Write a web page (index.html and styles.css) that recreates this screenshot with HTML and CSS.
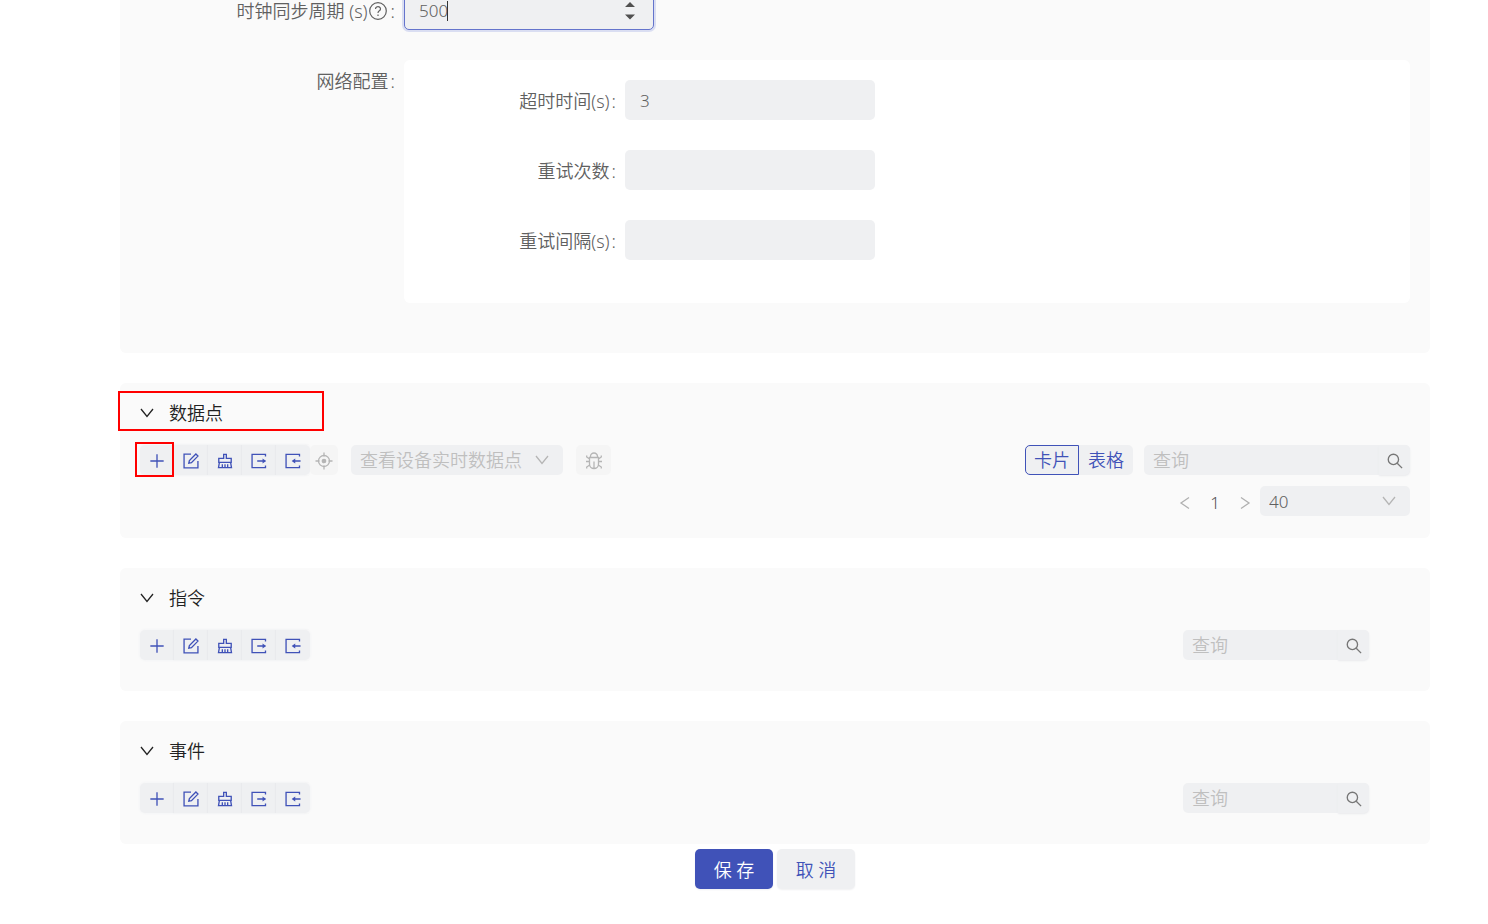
FILE: index.html
```html
<!DOCTYPE html>
<html lang="zh-CN">
<head>
<meta charset="utf-8">
<title>设备配置</title>
<link rel="stylesheet" href="styles.css">
</head>
<body>
<svg class="sprite" aria-hidden="true">
  <symbol id="i-plus" viewBox="0 0 18 18"><path d="M9 1.500v15M1.500 9h15"/></symbol>
  <symbol id="i-edit" viewBox="0 0 18 18"><path d="M9 1.200H1.200V16.800H16.800V9M6.500 11.500l.7-3L14.500 1.200l2.300 2.300-7.300 7.300z"/></symbol>
  <symbol id="i-clear" viewBox="0 0 18 18"><path d="M7.500 6V1.500h3V6h5.500v4.500H2V6zM2.700 10.500L1.700 16.500h14.600l-1-6M6 16v-3.300M9 16v-3.300M12 16v-3.300"/></symbol>
  <symbol id="i-export" viewBox="0 0 18 18"><path d="M16.300 4V1.500H1.200V16.500H16.300V14M7 9h9"/><path fill="currentColor" stroke="none" d="M13 6.200L17 9l-4 2.800z"/></symbol>
  <symbol id="i-import" viewBox="0 0 18 18"><path d="M16.300 4V1.500H1.200V16.500H16.300V14M9 9h8.500"/><path fill="currentColor" stroke="none" d="M11.500 6.200L7.500 9l4 2.800z"/></symbol>
  <symbol id="i-aim" viewBox="0 0 18 18"><circle cx="9" cy="9" r="5.500"/><circle cx="9" cy="9" r="1.700" fill="currentColor"/><path d="M9 .5v4M9 13.500v4M.5 9h4M13.500 9h4"/></symbol>
  <symbol id="i-bug" viewBox="0 0 18 18"><path d="M5.500 5.500V4.500a3.500 3.500 0 0 1 7 0v1M4.500 5.500h9V12a4.500 4.500 0 0 1-9 0zM1 9.500h3.500M13.500 9.500H17M1.700 3.500v1.500l2.800 2M16.300 3.500v1.500l-2.800 2M1.700 16.500V15l3-2M16.300 16.500V15l-3-2M9 9.500v6.500"/></symbol>
  <symbol id="i-search" viewBox="0 0 18 18"><circle cx="7.200" cy="7.200" r="5.800"/><path d="M11.500 11.500l5.500 5.500"/></symbol>
  <symbol id="i-down" viewBox="0 0 14 14"><path d="M1 3l6 7.500L13 3"/></symbol>
  <symbol id="i-left" viewBox="0 0 14 14"><path d="M11 1.500L3 7l8 5.500"/></symbol>
  <symbol id="i-right" viewBox="0 0 14 14"><path d="M3 1.500L11 7l-8 5.500"/></symbol>
  <symbol id="i-help" viewBox="0 0 18 18"><circle cx="9" cy="9" r="8.300"/><path d="M6.500 7a2.500 2.300 0 1 1 3.900 1.800C9.500 9.400 9 9.700 9 11M9 12.500v1.500"/></symbol>
  <symbol id="i-spin" viewBox="0 0 10 18"><path fill="currentColor" stroke="none" d="M5 0l5 5H0zM5 17.500l5-5H0z"/></symbol>
</svg>

<main class="page">
  <form class="form">
    <section class="panel settings">
      <div class="field">
        <label class="label" for="sync">时钟同步周期 (s)<svg class="icon"><use href="#i-help"/></svg><span class="colon">:</span></label>
        <div class="number">
          <input class="input focused" id="sync" type="number" value="500">
          <span class="caret"></span>
          <svg class="spin"><use href="#i-spin"/></svg>
        </div>
      </div>
      <div class="field">
        <span class="label">网络配置<span class="colon">:</span></span>
        <div class="group">
          <div class="field"><label class="label" for="timeout">超时时间(s)<span class="colon">:</span></label><input class="input" id="timeout" type="text" value="3"></div>
          <div class="field"><label class="label" for="retries">重试次数<span class="colon">:</span></label><input class="input" id="retries" type="text"></div>
          <div class="field"><label class="label" for="interval">重试间隔(s)<span class="colon">:</span></label><input class="input" id="interval" type="text"></div>
        </div>
      </div>
    </section>

    <section class="panel points">
      <span class="mark mark-title"></span>
      <span class="mark mark-add"></span>
      <h2 class="title"><svg class="chevron"><use href="#i-down"/></svg>数据点</h2>
      <div class="bar">
        <div class="tools">
          <button class="tool" type="button" aria-label="添加"><svg class="icon"><use href="#i-plus"/></svg></button>
          <button class="tool" type="button" aria-label="编辑"><svg class="icon"><use href="#i-edit"/></svg></button>
          <button class="tool" type="button" aria-label="清空"><svg class="icon"><use href="#i-clear"/></svg></button>
          <button class="tool" type="button" aria-label="导出"><svg class="icon"><use href="#i-export"/></svg></button>
          <button class="tool" type="button" aria-label="导入"><svg class="icon"><use href="#i-import"/></svg></button>
        </div>
        <button class="tool off aim" type="button" disabled aria-label="定位"><svg class="icon"><use href="#i-aim"/></svg></button>
        <div class="select live">
          <select aria-label="实时数据点"><option>查看设备实时数据点</option></select>
          <svg class="chevron"><use href="#i-down"/></svg>
        </div>
        <button class="tool off bug" type="button" disabled aria-label="调试"><svg class="icon"><use href="#i-bug"/></svg></button>
        <div class="right">
          <div class="switch">
            <button class="view on" type="button">卡片</button>
            <button class="view" type="button">表格</button>
          </div>
          <div class="search wide">
            <input type="text" placeholder="查询" aria-label="查询数据点">
            <button class="find" type="button" aria-label="搜索"><svg class="icon"><use href="#i-search"/></svg></button>
          </div>
        </div>
      </div>
      <nav class="pager">
        <button class="step" type="button" aria-label="上一页"><svg class="chevron"><use href="#i-left"/></svg></button>
        <button class="step now" type="button">1</button>
        <button class="step" type="button" aria-label="下一页"><svg class="chevron"><use href="#i-right"/></svg></button>
        <div class="select size">
          <select aria-label="每页条数"><option>40</option></select>
          <svg class="chevron"><use href="#i-down"/></svg>
        </div>
      </nav>
    </section>

    <section class="panel short">
      <h2 class="title"><svg class="chevron"><use href="#i-down"/></svg>指令</h2>
      <div class="bar">
        <div class="tools">
          <button class="tool" type="button" aria-label="添加"><svg class="icon"><use href="#i-plus"/></svg></button>
          <button class="tool" type="button" aria-label="编辑"><svg class="icon"><use href="#i-edit"/></svg></button>
          <button class="tool" type="button" aria-label="清空"><svg class="icon"><use href="#i-clear"/></svg></button>
          <button class="tool" type="button" aria-label="导出"><svg class="icon"><use href="#i-export"/></svg></button>
          <button class="tool" type="button" aria-label="导入"><svg class="icon"><use href="#i-import"/></svg></button>
        </div>
        <div class="right">
          <div class="search">
            <input type="text" placeholder="查询" aria-label="查询指令">
            <button class="find" type="button" aria-label="搜索"><svg class="icon"><use href="#i-search"/></svg></button>
          </div>
        </div>
      </div>
    </section>

    <section class="panel short">
      <h2 class="title"><svg class="chevron"><use href="#i-down"/></svg>事件</h2>
      <div class="bar">
        <div class="tools">
          <button class="tool" type="button" aria-label="添加"><svg class="icon"><use href="#i-plus"/></svg></button>
          <button class="tool" type="button" aria-label="编辑"><svg class="icon"><use href="#i-edit"/></svg></button>
          <button class="tool" type="button" aria-label="清空"><svg class="icon"><use href="#i-clear"/></svg></button>
          <button class="tool" type="button" aria-label="导出"><svg class="icon"><use href="#i-export"/></svg></button>
          <button class="tool" type="button" aria-label="导入"><svg class="icon"><use href="#i-import"/></svg></button>
        </div>
        <div class="right">
          <div class="search">
            <input type="text" placeholder="查询" aria-label="查询事件">
            <button class="find" type="button" aria-label="搜索"><svg class="icon"><use href="#i-search"/></svg></button>
          </div>
        </div>
      </div>
    </section>
  </form>
  <div class="actions">
    <button class="action primary" type="button">保 存</button>
    <button class="action" type="button">取 消</button>
  </div>
</main>
</body>
</html>
```

FILE: styles.css
```css
* { box-sizing: border-box; }
body {
  margin: 0;
  background: #fff;
  color: #606060;
  font: 350 18px/30px "Noto Sans", "Noto Sans CJK SC", sans-serif;
}
button, input, select { font: inherit; color: inherit; border: 0; margin: 0; padding: 0; }
button { cursor: pointer; }
svg { fill: none; stroke: currentColor; flex: none; }
.sprite { position: absolute; width: 0; height: 0; }
.icon { width: 16px; height: 16px; stroke-width: 1.5; }
.chevron { width: 14px; height: 14px; stroke-width: 1.3; }

.page { padding: 0 58px 0 120px; margin-top: -10px; }
.form { display: flex; flex-direction: column; gap: 30px; }
.panel { background: #fafafa; border-radius: 6px; position: relative; }

.settings { padding: 0 20px 50px 0; display: flex; flex-direction: column; gap: 30px; }
.field { display: flex; }
.label {
  flex: none;
  width: 284px;
  height: 40px;
  padding: 1px 9px 0 0;
  display: flex;
  align-items: center;
  justify-content: flex-end;
  font-size: 18px;
}
.label .icon { width: 18px; height: 18px; margin-left: 1px; stroke-width: 1.2; }
.colon { margin-left: 2px; }
.label .icon + .colon { margin-left: 4px; }
.input {
  width: 250px;
  height: 40px;
  padding: 0 15px;
  border-radius: 5px;
  background: #eff0f2;
  font-size: 17px;
  outline: 0;
}
.number { position: relative; }
.number .input { appearance: textfield; padding: 0 14px; }
.number .input::-webkit-inner-spin-button { appearance: none; }
.focused { border: 1px solid #6474cc; box-shadow: 0 0 0 2px #dadef2; }
.caret { position: absolute; left: 43px; top: 11px; width: 1px; height: 20px; background: #333; }
.spin { position: absolute; right: 19px; top: 12px; width: 10px; height: 18px; color: #505050; }
.group {
  flex: 1;
  background: #fff;
  border-radius: 6px;
  padding: 20px 20px 43px 0;
  display: flex;
  flex-direction: column;
  gap: 30px;
}
.group .label { width: 221px; }

.points { padding: 15px 20px 22px; }
.short { padding: 15px 61px 31px 20px; }
.title {
  margin: 0 0 17px;
  font-size: 18px;
  font-weight: 350;
  line-height: 30px;
  color: #222;
  display: flex;
  align-items: center;
  gap: 15px;
}
.bar { display: flex; height: 30px; }
.tools, .tool { border-radius: 5px; }
.tools { display: flex; background: #eff0f2; box-shadow: 0 0 3px #eff0f2; }
.tool {
  width: 34px;
  height: 30px;
  display: flex;
  align-items: center;
  justify-content: center;
  padding-top: 1px;
  background: none;
  color: #4052b8;
}
.tool + .tool { box-shadow: -1px 0 1px #e9eaed; border-radius: 0; }
.tool.off { background: #f5f5f5; color: #b5b5b5; }
.aim { width: 28px; }
.bug { width: 35px; }
.off .icon { width: 18px; height: 18px; stroke-width: 1.3; }
.select { position: relative; background: #eff0f2; border-radius: 5px; height: 30px; }
.select select {
  appearance: none;
  width: 100%;
  height: 30px;
  padding: 0 9px;
  background: none;
  outline: 0;
}
.select .chevron { position: absolute; right: 14px; top: 8px; color: #b5b5b5; pointer-events: none; }
.live { width: 212px; margin: 0 13px; color: #bfbfbf; }
.size { width: 150px; }
.size select { font-size: 17px; }
.right { margin-left: auto; display: flex; gap: 11px; }
.switch { display: flex; background: #eff0f2; border-radius: 5px; }
.view { width: 54px; height: 30px; line-height: 28px; background: none; color: #4052b8; }
.view.on { border: 1px solid #4052b8; border-radius: 5px 0 0 5px; }
.search { display: flex; background: #eff0f2; border-radius: 5px; width: 186px; height: 30px; }
.search.wide { width: 266px; }
.search input { flex: 1; min-width: 0; padding: 0 9px; background: none; outline: 0; }
.search input::placeholder { color: #bfbfbf; opacity: 1; }
.find {
  width: 31px;
  display: flex;
  align-items: center;
  justify-content: center;
  padding-top: 1px;
  background: #eff0f2;
  color: #777;
  border-radius: 0 5px 5px 0;
  box-shadow: 0 1px 2px #e9eaed;
}
.pager { display: flex; justify-content: flex-end; margin-top: 11px; }
.step { width: 30px; height: 34px; margin-bottom: -4px; background: none; display: flex; align-items: center; justify-content: center; color: #b0b0b0; }
.now { color: #555; font-size: 17px; }

.mark { position: absolute; border: 2px solid #f00; pointer-events: none; z-index: 1; }
.mark-title { left: -2px; top: 8px; width: 206px; height: 40px; }
.mark-add { left: 15px; top: 59px; width: 39px; height: 35px; }

.actions { display: flex; justify-content: center; gap: 4px; padding: 5px 0 35px; }
.action { width: 78px; height: 40px; padding-top: 2px; border-radius: 5px; background: #eff0f2; color: #4052b8; box-shadow: 0 1px 2px #f0f0f2; }
.primary { background: #4052b8; color: #fff; }
```
